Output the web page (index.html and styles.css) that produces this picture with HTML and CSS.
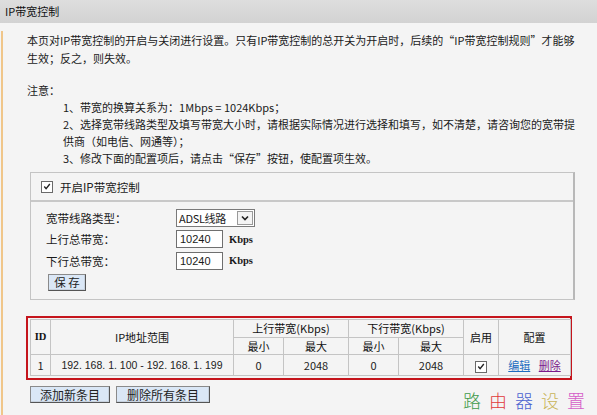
FILE: index.html
```html
<!DOCTYPE html>
<html lang="zh-CN">
<head>
<meta charset="utf-8">
<title>IP带宽控制</title>
<link rel="stylesheet" href="styles.css">
</head>
<body>
<div class="titlebar">IP带宽控制</div>
<div class="main">
  <p class="intro">本页对IP带宽控制的开启与关闭进行设置。只有IP带宽控制的总开关为开启时，后续的“IP带宽控制规则”才能够<br>生效；反之，则失效。</p>
  <p class="note">注意：</p>
  <div class="items">
    <div>1、带宽的换算关系为：1Mbps = 1024Kbps；</div>
    <div>2、选择宽带线路类型及填写带宽大小时，请根据实际情况进行选择和填写，如不清楚，请咨询您的宽带提<br>供商（如电信、网通等）；</div>
    <div>3、修改下面的配置项后，请点击“保存”按钮，使配置项生效。</div>
  </div>

  <div class="panel">
    <div class="panel-head">
      <span class="cb"><svg viewBox="0 0 11 11" width="11" height="11"><path d="M2.5 5.5 L4.5 7.8 L8.6 2.8" fill="none" stroke="#222" stroke-width="1.5"/></svg></span>
      <span>开启IP带宽控制</span>
    </div>
    <div class="panel-body">
      <div class="row">
        <span class="lbl">宽带线路类型：</span>
        <span class="sel"><span class="sel-text">ADSL线路</span><span class="sel-btn"><svg viewBox="0 0 10 10" width="10" height="10"><path d="M2 3.5 L5 6.5 L8 3.5" fill="none" stroke="#222" stroke-width="1.6"/></svg></span></span>
      </div>
      <div class="row">
        <span class="lbl">上行总带宽：</span>
        <span class="inp">10240</span><span class="unit">Kbps</span>
      </div>
      <div class="row">
        <span class="lbl">下行总带宽：</span>
        <span class="inp">10240</span><span class="unit">Kbps</span>
      </div>
      <div class="btnrow"><button class="btn btn-save">保 存</button></div>
    </div>
  </div>

  <div class="redbox">
    <table class="rules">
      <colgroup>
        <col class="c-id"><col class="c-ip"><col class="c-min"><col class="c-max"><col class="c-min"><col class="c-max"><col class="c-en"><col class="c-cfg">
      </colgroup>
      <tr class="h1">
        <th rowspan="2" class="th-id">ID</th>
        <th rowspan="2">IP地址范围</th>
        <th colspan="2">上行带宽(Kbps)</th>
        <th colspan="2">下行带宽(Kbps)</th>
        <th rowspan="2">启用</th>
        <th rowspan="2">配置</th>
      </tr>
      <tr class="h2">
        <th>最小</th><th>最大</th><th>最小</th><th>最大</th>
      </tr>
      <tr class="data">
        <td>1</td>
        <td class="td-ip">192. 168. 1. 100 - 192. 168. 1. 199</td>
        <td>0</td>
        <td>2048</td>
        <td>0</td>
        <td>2048</td>
        <td><span class="cb cb-small"><svg viewBox="0 0 11 11" width="11" height="11"><path d="M2.5 5.5 L4.5 7.8 L8.6 2.8" fill="none" stroke="#222" stroke-width="1.5"/></svg></span></td>
        <td><a class="lk-edit" href="#">编辑</a> <a class="lk-del" href="#">删除</a></td>
      </tr>
    </table>
  </div>

  <div class="actions">
    <button class="btn btn-add">添加新条目</button>
    <button class="btn btn-delall">删除所有条目</button>
    <div class="watermark"><span class="w1">路</span><span class="w2">由</span><span class="w3">器</span><span class="w4">设</span><span class="w5">置</span></div>
  </div>
</div>
</body>
</html>
```
FILE: styles.css
```css
* { box-sizing: border-box; }
html, body { margin: 0; padding: 0; }
body {
  background: #f4f4f4;
  font-family: "Noto Sans CJK SC", "Liberation Sans", sans-serif;
  font-size: 11px;
  color: #1a1a1a;
}
.titlebar {
  height: 23px;
  line-height: 23px;
  padding-left: 5px;
  background: linear-gradient(#dedede, #d2d2d2);
  color: #111;
  font-size: 11px;
}
.main {
  margin-left: 1px;
  border-left: 2px solid #f0c68a;
  border-bottom: 2px solid #ecd3a8;
  height: 389px;
  padding-left: 24px;
}
.intro {
  margin: 8px 0 0 0;
  line-height: 18px;
  white-space: nowrap;
}
.note {
  margin: 14px 0 0 0;
  line-height: 18px;
}
.items {
  padding-left: 36px;
  line-height: 17px;
  white-space: nowrap;
  margin-top: 0;
}
.panel {
  margin: 5px 0 0 3px;
  width: 545px;
  border: 1px solid #c4c4c4;
  border-right: 2px solid #b8b8b8;
}
.panel-head {
  height: 29px;
  display: flex;
  align-items: center;
  gap: 7px;
  padding-left: 10px;
  border-bottom: 2px solid #c8c8c8;
  font-size: 11.5px;
}
.cb {
  display: inline-flex;
  width: 12px;
  height: 12px;
  border: 1px solid #6a6a6a;
  background: #fff;
  align-items: center;
  justify-content: center;
}
.panel-body {
  padding: 5px 0 8px 15px;
}
.row {
  height: 21.5px;
  display: flex;
  align-items: center;
}
.lbl {
  width: 130px;
  font-size: 11.5px;
}
.sel {
  display: inline-flex;
  width: 79px;
  height: 18px;
  border: 1px solid #7a7a7a;
  background: #fff;
}
.sel-text {
  flex: 1;
  padding-left: 2px;
  line-height: 16px;
  font-family: "Noto Sans CJK SC", sans-serif;
  font-size: 11px;
  letter-spacing: -0.3px;
}
.sel-btn {
  width: 16px;
  margin: 1px;
  border: 1px solid #9a9a9a;
  background: #f4f4f4;
  display: flex;
  align-items: center;
  justify-content: center;
}
.inp {
  display: inline-block;
  width: 47px;
  height: 18px;
  line-height: 16px;
  border: 1px solid #6f6f6f;
  background: #fff;
  padding-left: 3px;
  font-family: "Liberation Sans", sans-serif;
  font-size: 11px;
}
.unit {
  margin-left: 6px;
  font-family: "Liberation Serif", serif;
  font-weight: bold;
  font-size: 10.5px;
}
.btnrow { margin-top: 2px; }
.btn {
  font-family: "Noto Sans CJK SC", sans-serif;
  font-size: 11.5px;
  height: 17px;
  line-height: 13px;
  padding: 0;
  background: #dae7f6;
  border: 1px solid #555;
  border-top-color: #8a8a8a;
  border-left-color: #8a8a8a;
  box-shadow: inset -1px -1px 0 #c8d2de;
  color: #222;
}
.btn-save { width: 38px; margin-left: 2px; }
.redbox {
  margin: 16px 0 0 -1px;
  width: 546px;
  height: 64px;
  border: 2px solid #c5141c;
  padding: 1px 0 0 2px;
}
.rules {
  border-collapse: collapse;
  table-layout: fixed;
  width: 540px;
}
.c-id { width: 20px; }
.c-ip { width: 183px; }
.c-min { width: 50px; }
.c-max { width: 65px; }
.c-en { width: 35px; }
.c-cfg { width: 72px; }
.rules th, .rules td {
  border: 1px solid #c4c4c4;
  text-align: center;
  padding: 0;
  font-weight: normal;
  color: #222;
  font-size: 11px;
}
.rules th { color: #111; }
.h1 th { height: 18px; }
.h2 th { height: 17px; }
.data td { height: 21px; }
.rules .th-id { font-family: "Liberation Serif", serif; font-weight: bold; font-size: 10.5px; }
.rules .td-ip { font-family: "Liberation Sans", sans-serif; font-size: 10.5px; }
.cb-small { width: 12px; height: 12px; vertical-align: middle; }
.lk-edit { color: #1e6cc0; text-decoration: underline; margin-right: 6px; }
.lk-del { color: #7a1a8a; text-decoration: underline; }
.actions {
  margin-top: 6px;
  display: flex;
  align-items: flex-start;
  gap: 6px;
  margin-left: 3px;
  margin-right: 12px;
}
.btn-add { width: 80px; height: 17px; font-size: 12px; }
.btn-delall { width: 94px; height: 17px; font-size: 12px; }
.watermark {
  margin-left: auto;
  margin-top: 3px;
  display: flex;
  gap: 8px;
  font-size: 18px;
  line-height: 22px;
  font-family: "Noto Sans CJK SC", sans-serif;
  font-weight: 300;
}
.w1 { color: #3f9a4a; }
.w2 { color: #e03a3a; }
.w3 { color: #4a62d0; }
.w4 { color: #c9b45a; }
.w5 { color: #d45cc8; }
```
